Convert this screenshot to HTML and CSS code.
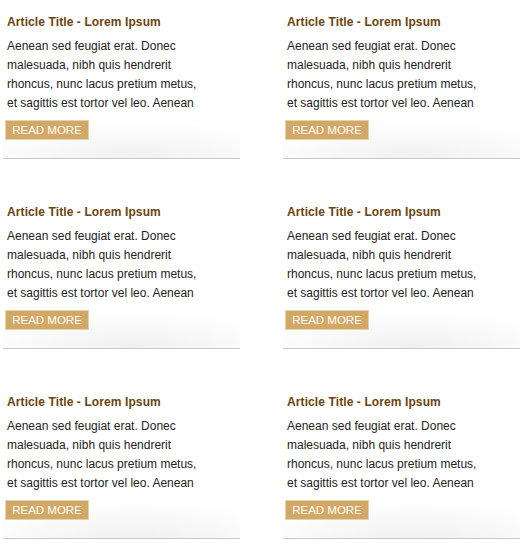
FILE: index.html
```html
<!DOCTYPE html>
<html>
<head>
<meta charset="utf-8">
<link rel="stylesheet" href="styles.css">
</head>
<body>
<div class="grid">
  <div class="card">
    <h2 class="title">Article Title - Lorem Ipsum</h2>
    <p class="text">Aenean sed feugiat erat. Donec malesuada, nibh quis hendrerit rhoncus, nunc lacus pretium metus, et sagittis est tortor vel leo. Aenean</p>
    <a class="btn" href="#">READ MORE</a>
  </div>
  <div class="card">
    <h2 class="title">Article Title - Lorem Ipsum</h2>
    <p class="text">Aenean sed feugiat erat. Donec malesuada, nibh quis hendrerit rhoncus, nunc lacus pretium metus, et sagittis est tortor vel leo. Aenean</p>
    <a class="btn" href="#">READ MORE</a>
  </div>
  <div class="card">
    <h2 class="title">Article Title - Lorem Ipsum</h2>
    <p class="text">Aenean sed feugiat erat. Donec malesuada, nibh quis hendrerit rhoncus, nunc lacus pretium metus, et sagittis est tortor vel leo. Aenean</p>
    <a class="btn" href="#">READ MORE</a>
  </div>
  <div class="card">
    <h2 class="title">Article Title - Lorem Ipsum</h2>
    <p class="text">Aenean sed feugiat erat. Donec malesuada, nibh quis hendrerit rhoncus, nunc lacus pretium metus, et sagittis est tortor vel leo. Aenean</p>
    <a class="btn" href="#">READ MORE</a>
  </div>
  <div class="card">
    <h2 class="title">Article Title - Lorem Ipsum</h2>
    <p class="text">Aenean sed feugiat erat. Donec malesuada, nibh quis hendrerit rhoncus, nunc lacus pretium metus, et sagittis est tortor vel leo. Aenean</p>
    <a class="btn" href="#">READ MORE</a>
  </div>
  <div class="card">
    <h2 class="title">Article Title - Lorem Ipsum</h2>
    <p class="text">Aenean sed feugiat erat. Donec malesuada, nibh quis hendrerit rhoncus, nunc lacus pretium metus, et sagittis est tortor vel leo. Aenean</p>
    <a class="btn" href="#">READ MORE</a>
  </div>
</div>
</body>
</html>
```
FILE: styles.css
```css
html, body {
  margin: 0;
  padding: 0;
  background: #fff;
}
body {
  font-family: "Liberation Sans", Arial, sans-serif;
}
.grid {
  display: grid;
  grid-template-columns: 237px 237px;
  column-gap: 43px;
  row-gap: 31px;
  padding-left: 3px;
}
.card {
  position: relative;
  height: 159px;
  box-sizing: border-box;
  border-bottom: 1px solid #c8c8c8;
  padding: 13px 0 0 4px;
}
.card::after {
  content: "";
  position: absolute;
  left: 0;
  right: 0;
  bottom: 0;
  height: 38px;
  background: radial-gradient(ellipse 70% 100% at 55% 100%, rgba(0,0,0,0.06), rgba(0,0,0,0) 100%);
  pointer-events: none;
}
.title {
  margin: 0;
  font-size: 12px;
  letter-spacing: 0.1px;
  line-height: 18px;
  font-weight: bold;
  color: #6b430d;
}
.text {
  margin: 6px 0 0;
  font-size: 12px;
  line-height: 19px;
  color: #222;
  width: 200px;
}
.btn {
  position: relative;
  z-index: 1;
  display: inline-block;
  margin: 7px 0 0 -2px;
  width: 82px;
  height: 18px;
  line-height: 18px;
  text-align: center;
  background: #d3a765;
  border: 1px solid #e4d3b2;
  color: #fff;
  font-size: 11.5px;
  text-decoration: none;
}
```
